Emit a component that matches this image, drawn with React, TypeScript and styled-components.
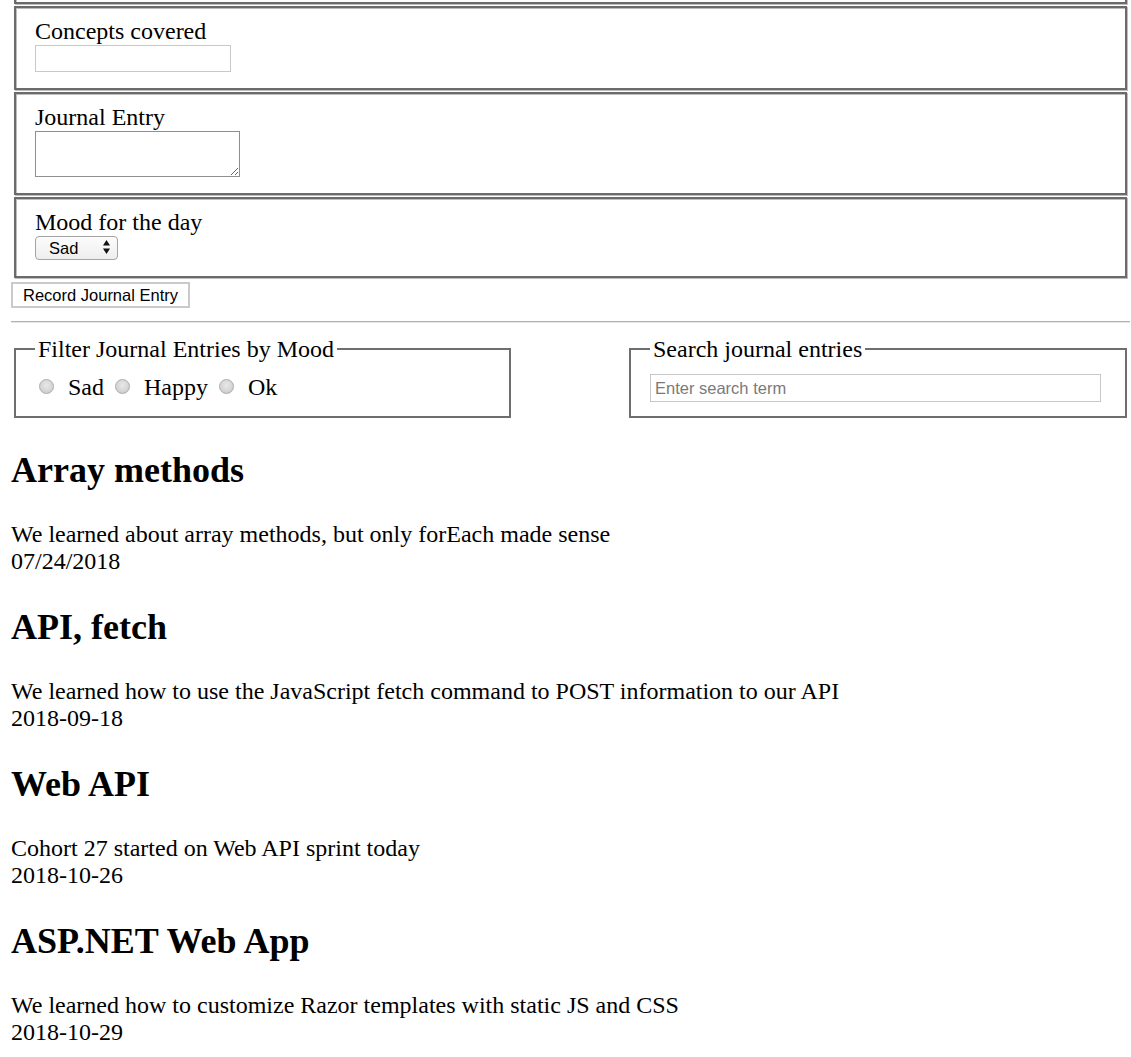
import React from "react";
import styled, { createGlobalStyle } from "styled-components";

const GlobalStyle = createGlobalStyle`
  html, body {
    margin: 0;
    padding: 0;
    background: #ffffff;
  }
  body {
    font-family: "Liberation Serif", "Times New Roman", serif;
    font-size: 24px;
    color: #000000;
  }
`;

const Page = styled.main`
  width: 1119px;
  padding: 0 1px 0 11px;
`;

const EntryForm = styled.form`
  margin: -52px 0 0;
`;

const Group = styled.fieldset`
  margin: 0 3px 2px;
  padding: 9px 18px 16px 19px;
  border: 2px solid #6b6b6b;
  box-shadow: inset 1px 1px 0 #bdbdbd, 1px 1px 0 #bdbdbd;
  min-width: 0;
`;

const FieldLabel = styled.label`
  display: block;
  line-height: 28px;
  font-size: 24px;
`;

const TextInput = styled.input`
  display: block;
  box-sizing: border-box;
  width: 196px;
  height: 27px;
  margin: 0;
  padding: 0 4px;
  border: 1px solid #c9c9c9;
  font: 16.5px "Liberation Sans", Arial, sans-serif;
  background: #fff;
`;

const EntryArea = styled.textarea`
  display: block;
  box-sizing: border-box;
  width: 205px;
  height: 46px;
  margin: 0;
  padding: 2px;
  border: 1px solid #8f8f8f;
  font: 16.5px "Liberation Sans", Arial, sans-serif;
  resize: both;
`;

const SelectWrap = styled.div`
  position: relative;
  width: 83px;
  height: 24px;
`;

const MoodSelect = styled.select`
  appearance: none;
  -webkit-appearance: none;
  display: block;
  box-sizing: border-box;
  width: 100%;
  height: 100%;
  margin: 0;
  padding: 0 0 0 13px;
  border: 1px solid #a4a4a4;
  border-radius: 4px;
  background: linear-gradient(#fcfcfc, #eeeeee);
  font: 16.5px "Liberation Sans", Arial, sans-serif;
  color: #000;
`;

const SelectArrows = styled.svg`
  position: absolute;
  right: 8px;
  top: 3px;
  pointer-events: none;
`;

const SubmitButton = styled.button`
  display: block;
  box-sizing: border-box;
  height: 26px;
  margin: 4px 0 0;
  padding: 0 10px;
  border: 2px solid #cacaca;
  background: #ffffff;
  font: 16.5px "Liberation Sans", Arial, sans-serif;
  color: #000;
`;

const Divider = styled.hr`
  height: 0;
  margin: 13px 0 12px;
  border: 0;
  border-top: 1px solid #b2b2b2;
  border-bottom: 1px solid #e6e6e6;
`;

const FilterRow = styled.div`
  display: flex;
  justify-content: space-between;
  align-items: stretch;
`;

const SideGroup = styled.fieldset<{ $width: number }>`
  box-sizing: border-box;
  width: ${(p) => p.$width}px;
  margin: 0 3px;
  padding: 8px 18px 14px 19px;
  border: 2px solid #6e6e6e;
  min-width: 0;
`;

const Legend = styled.legend`
  padding: 0 3px;
  font-size: 24px;
  line-height: 28px;
`;

const RadioRow = styled.div`
  display: flex;
  align-items: center;
  gap: 11px;
  height: 31px;
  padding-left: 4px;
`;

const RadioOption = styled.label`
  display: inline-flex;
  align-items: center;
  gap: 14px;
  line-height: 28px;
`;

const Radio = styled.input`
  appearance: none;
  -webkit-appearance: none;
  box-sizing: border-box;
  width: 15px;
  height: 15px;
  margin: 0;
  border: 1px solid #acacac;
  border-radius: 50%;
  background: radial-gradient(circle at 50% 40%, #e9e9e9 0%, #d6d6d6 55%, #c4c4c4 100%);
`;

const SearchInput = styled.input`
  display: block;
  box-sizing: border-box;
  width: 451px;
  height: 28px;
  margin: 3px 0 0;
  padding: 0 4px;
  border: 1px solid #c8c8c8;
  font: 16.5px "Liberation Sans", Arial, sans-serif;
  &::placeholder {
    color: #7a7a7a;
  }
`;

const EntryList = styled.section``;

const Entry = styled.article``;

const EntryTitle = styled.h2`
  margin: 31px 0 30px;
  font-size: 36px;
  font-weight: bold;
`;

const EntryLine = styled.div`
  font-size: 24px;
`;

const entries = [
  {
    title: "Array methods",
    text: "We learned about array methods, but only forEach made sense",
    date: "07/24/2018",
  },
  {
    title: "API, fetch",
    text: "We learned how to use the JavaScript fetch command to POST information to our API",
    date: "2018-09-18",
  },
  {
    title: "Web API",
    text: "Cohort 27 started on Web API sprint today",
    date: "2018-10-26",
  },
  {
    title: "ASP.NET Web App",
    text: "We learned how to customize Razor templates with static JS and CSS",
    date: "2018-10-29",
  },
];

const moods = ["Sad", "Happy", "Ok"];

export default function App() {
  return (
    <>
      <GlobalStyle />
      <Page>
        <EntryForm onSubmit={(e) => e.preventDefault()}>
          <Group>
            <TextInput type="text" id="journalDate" aria-label="Date of entry" />
          </Group>
          <Group>
            <FieldLabel htmlFor="concepts">Concepts covered</FieldLabel>
            <TextInput type="text" id="concepts" />
          </Group>
          <Group>
            <FieldLabel htmlFor="entry">Journal Entry</FieldLabel>
            <EntryArea id="entry" />
          </Group>
          <Group>
            <FieldLabel htmlFor="mood">Mood for the day</FieldLabel>
            <SelectWrap>
              <MoodSelect id="mood" defaultValue="Sad">
                {moods.map((m) => (
                  <option key={m} value={m}>
                    {m}
                  </option>
                ))}
              </MoodSelect>
              <SelectArrows width="7" height="16" viewBox="0 0 7 16">
                <path d="M3.5 1 L7 6.5 L0 6.5 Z" fill="#111" />
                <path d="M0 9.5 L7 9.5 L3.5 15 Z" fill="#111" />
              </SelectArrows>
            </SelectWrap>
          </Group>
          <SubmitButton type="submit">Record Journal Entry</SubmitButton>
        </EntryForm>
        <Divider />
        <FilterRow>
          <SideGroup $width={497}>
            <Legend>Filter Journal Entries by Mood</Legend>
            <RadioRow>
              {moods.map((m) => (
                <RadioOption key={m}>
                  <Radio type="radio" name="moodFilter" value={m} />
                  {m}
                </RadioOption>
              ))}
            </RadioRow>
          </SideGroup>
          <SideGroup $width={498}>
            <Legend>Search journal entries</Legend>
            <SearchInput type="text" placeholder="Enter search term" />
          </SideGroup>
        </FilterRow>
        <EntryList>
          {entries.map((e) => (
            <Entry key={e.title}>
              <EntryTitle>{e.title}</EntryTitle>
              <EntryLine>{e.text}</EntryLine>
              <EntryLine>{e.date}</EntryLine>
            </Entry>
          ))}
        </EntryList>
      </Page>
    </>
  );
}
